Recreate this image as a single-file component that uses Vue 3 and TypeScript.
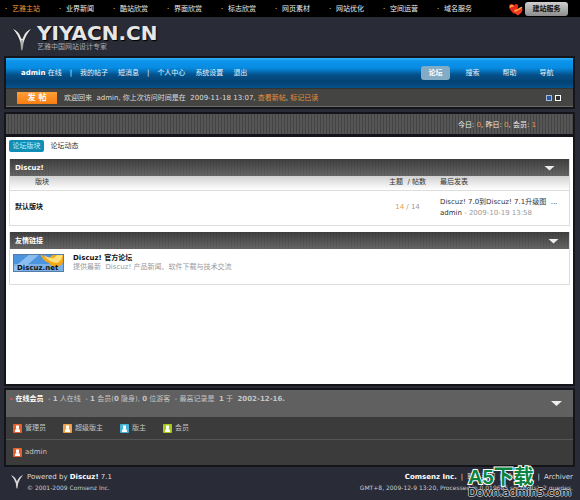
<script setup lang="ts">
import { ref } from 'vue'

interface Role { name: string; tone: string }

const siteLinks: string[] = ['艺雅主站', '业界新闻', '酷站欣赏', '界面欣赏', '标志欣赏', '网页素材', '网站优化', '空间运营', '域名服务']
const mainTabs: string[] = ['论坛', '搜索', '帮助', '导航']
const roles: Role[] = [
  { name: '管理员', tone: 'red' },
  { name: '超级版主', tone: 'orange' },
  { name: '版主', tone: 'blue' },
  { name: '会员', tone: 'green' },
]

const forumOpen = ref(true)
const linksOpen = ref(true)
const onlineOpen = ref(true)
</script>

<template>
  <div class="page">
    <nav class="topbar">
      <ul class="site-links">
        <li v-for="(name, i) in siteLinks" :key="name"><a href="#" :class="{ current: i === 0 }">{{ name }}</a></li>
      </ul>
      <div class="service">
        <svg class="hearts" viewBox="0 0 14 13" aria-hidden="true">
          <path d="M5 11C2 8 0 6 0 3.500C0 1 3 0 5 2.500C7 0 10 1 9 4.500C8.500 7 7 9 5 11Z" fill="#e8281c" />
          <path d="M9 12.500C6 10.500 4 9 5 6.500C6 4.500 8 5 9 6.500C10 3.500 14 4 13.500 7C13 9.500 11 11 9 12.500Z" fill="#f3391f" />
          <path d="M1.500 4Q2 2 4 3M6 8Q9 7 12.500 4.500" stroke="#ffb545" stroke-width="1.500" fill="none" stroke-linecap="round" />
        </svg>
        <button type="button" class="service-btn">建站服务</button>
      </div>
    </nav>

    <header class="brand">
      <svg class="mark" viewBox="0 0 20 24" aria-hidden="true">
        <path d="M0 1Q7 4 9 10L10 12L11 10Q13 4 20 1Q14 8 12 15L10.500 24L9 23L8 15Q6 8 0 1Z" fill="#e8e8ea" stroke="#111" stroke-width=".6" />
        <path d="M10 13V23" stroke="#777" />
      </svg>
      <div>
        <h1>YIYACN.CN</h1>
        <p>艺雅中国网站设计专家</p>
      </div>
    </header>

    <main>
      <section class="panel menu-panel">
        <div class="menu">
          <div class="user-menu">
            <span><a href="#" class="strong">admin</a> 在线</span>
            <span class="bar">|</span>
            <a href="#">我的帖子</a>
            <a href="#">短消息</a>
            <span class="bar">|</span>
            <a href="#">个人中心</a>
            <a href="#">系统设置</a>
            <a href="#">退出</a>
          </div>
          <nav class="tabs">
            <a v-for="(tab, i) in mainTabs" :key="tab" href="#" :class="{ active: i === 0 }">{{ tab }}</a>
          </nav>
        </div>
        <div class="welcome">
          <button type="button" class="post">发 帖</button>
          <p>欢迎回来&nbsp; admin, 你上次访问时间是在&nbsp; 2009-11-18 13:07, <a href="#">查看新帖</a>, <a href="#">标记已读</a></p>
          <div class="swatches">
            <button type="button" class="swatch blue" aria-label="蓝色"></button>
            <button type="button" class="swatch" aria-label="灰色"></button>
          </div>
        </div>
      </section>

      <section class="panel stats">
        <p>今日: <b>0</b>, 昨日: <b>0</b>, 会员: <b>1</b></p>
      </section>

      <section class="panel content">
        <nav class="subtabs">
          <a href="#" class="active">论坛版块</a>
          <a href="#">论坛动态</a>
        </nav>

        <section class="box">
          <header class="box-head">
            <h2>Discuz!</h2>
            <button type="button" class="toggle" aria-label="Discuz!" @click="forumOpen = !forumOpen"></button>
          </header>
          <table v-if="forumOpen">
            <thead>
              <tr><th class="name">版块</th><th class="count">主题&nbsp; / 帖数</th><th class="last">最后发表</th></tr>
            </thead>
            <tbody>
              <tr>
                <td class="name"><a href="#">默认版块</a></td>
                <td class="count"><b>14</b> / 14</td>
                <td class="last">
                  <a href="#">Discuz! 7.0到Discuz! 7.1升级图&nbsp; ...</a>
                  <p><a href="#">admin</a> - 2009-10-19 13:58</p>
                </td>
              </tr>
            </tbody>
          </table>
        </section>

        <section class="box">
          <header class="box-head">
            <h2>友情链接</h2>
            <button type="button" class="toggle inset" aria-label="友情链接" @click="linksOpen = !linksOpen"></button>
          </header>
          <div v-if="linksOpen" class="friend">
            <svg class="banner" viewBox="0 0 51 18" role="img" aria-label="Discuz.net">
              <rect width="51" height="18" fill="#4d94de" />
              <path d="M0 14L17 0H27L6 18H0Z" fill="#8abdf0" />
              <rect y="10" width="51" height="8" fill="#9ac5ef" opacity=".6" />
              <path d="M27 0Q32 3 36 4L41 0H51V6Q49 13 43 13Q38 13 36 9Q30 7 27 0Z" fill="#f5a81c" />
              <path d="M31 1Q36 5 41 4L45 0H50Q49 7 44 9Q35 8 31 1Z" fill="#ffe17a" />
              <rect x=".5" y=".5" width="50" height="17" fill="none" stroke="#567ba6" />
              <text x="4" y="16" class="banner-text">Discuz.net</text>
            </svg>
            <div>
              <h3><a href="#">Discuz! 官方论坛</a></h3>
              <p>提供最新&nbsp; Discuz! 产品新闻、软件下载与技术交流</p>
            </div>
          </div>
        </section>
      </section>

      <section class="panel online">
        <header class="online-head">
          <p><i>»</i> <a href="#">在线会员</a>&nbsp; - <b>1</b> 人在线&nbsp; - <b>1</b> 会员(<b>0</b> 隐身), <b>0</b> 位游客&nbsp; - 最高记录是&nbsp; <b>1</b> 于&nbsp; <b>2002-12-16.</b></p>
          <button type="button" class="toggle" aria-label="在线会员" @click="onlineOpen = !onlineOpen"></button>
        </header>
        <template v-if="onlineOpen">
          <ul class="roles">
            <li v-for="role in roles" :key="role.name">
              <svg :class="['person', role.tone]" viewBox="0 0 9 9" aria-hidden="true">
                <rect width="9" height="9" rx="1" /><path d="M3 1.500H6V4L5.500 5L7 6V8H2V6L3.500 5L3 4Z" fill="#fff" />
              </svg>{{ role.name }}
            </li>
          </ul>
          <ul class="roles members">
            <li>
              <svg class="person red" viewBox="0 0 9 9" aria-hidden="true">
                <rect width="9" height="9" rx="1" /><path d="M3 1.500H6V4L5.500 5L7 6V8H2V6L3.500 5L3 4Z" fill="#fff" />
              </svg><a href="#">admin</a>
            </li>
          </ul>
        </template>
      </section>
    </main>

    <footer class="footer">
      <div class="powered">
        <svg class="mark small" viewBox="0 0 20 24" aria-hidden="true">
          <path d="M0 1Q7 4 9 10L10 12L11 10Q13 4 20 1Q14 8 12 15L10.500 24L9 23L8 15Q6 8 0 1Z" fill="#d8d8da" />
        </svg>
        <div>
          <p>Powered by <strong>Discuz!</strong> 7.1</p>
          <p class="fine">© 2001-2009 Comsenz Inc.</p>
        </div>
      </div>
      <div class="foot-links">
        <p><strong>Comsenz Inc.</strong><span>|</span><a href="#">联系我们</a><span>|</span><a href="#">论坛首页</a><span>|</span><a href="#">Archiver</a></p>
        <p class="fine">GMT+8, 2009-12-9 13:20, Processed in 0.019685 second(s), 2 queries.</p>
      </div>
      <div class="watermark">
        <span class="wm-name">A5下载</span>
        <span class="wm-url">Down.admin5.com</span>
      </div>
    </footer>
  </div>
</template>

<style>
body { margin: 0; background: #292b36; }
</style>

<style scoped>
* { box-sizing: border-box; }
.page {
  min-height: 100vh;
  background: #292b36;
  color: #ddd;
  font: 7px/11px "DejaVu Sans", "Noto Sans CJK SC", sans-serif;
}
h1, h2, h3, p, ul { margin: 0; padding: 0; font-size: inherit; }
ul { list-style: none; }
a { color: inherit; text-decoration: none; }
button { margin: 0; padding: 0; border: 0; font: inherit; cursor: pointer; }
p, a, h2, h3, li { white-space: nowrap; }

.topbar { display: flex; justify-content: space-between; align-items: center; height: 17px; padding: 1px 12px 0 5px; background: #000; }
.site-links { display: flex; }
.site-links li { width: 54px; color: #eee; }
.site-links li::before { content: "·"; display: inline-block; width: 7px; }
.site-links .current { color: #e89a3c; }
.service { display: flex; align-items: center; gap: 2px; }
.hearts { width: 14px; height: 13px; }
.service-btn { width: 43px; height: 14px; border-radius: 3px; background: linear-gradient(#d0d0d0, #8c8c8c); color: #111; font-weight: bold; line-height: 14px; }

.brand { display: flex; gap: 5px; height: 41px; padding: 8px 12px; }
.mark { width: 20px; height: 24px; margin-top: 2px; }
.brand h1 { font-size: 20px; line-height: 17px; color: #e6e6e6; text-shadow: 1px 1px 1px #000; }
.brand p { color: #aaa; line-height: 9px; margin-top: 1px; }

main { padding: 0 7px 0 6px; }
.panel { outline: 2px solid #14151b; }
.menu { display: flex; justify-content: space-between; align-items: center; height: 30px; padding: 0 12px 0 15px; background: linear-gradient(#30b0f4 0, #0c95ed 3px, #078be0 10px, #05508a 17px, #034273 24px, #05538c); color: #e4f3fb; }
.user-menu { display: flex; gap: 10px; }
.user-menu .bar { margin: 0 -2px; }
.strong { font-weight: bold; color: #fff; }
.tabs { display: flex; gap: 8px; }
.tabs a { width: 29px; height: 14px; border-radius: 3px; line-height: 14px; text-align: center; }
.tabs .active { background: #82abc6; color: #fff; font-weight: bold; }
.welcome { display: flex; align-items: center; height: 19px; padding: 1px 12px 0 11px; border-top: 1px solid #333; border-bottom: 1px solid #6b6b6b; background: #444442; }
.welcome p { flex: 1; margin-left: 7px; }
.welcome a { color: #e89038; }
.post { width: 40px; height: 12px; background: linear-gradient(#ff9f38, #f77d10); color: #fff; font-size: 8px; line-height: 12px; font-weight: bold; }
.swatches { display: flex; gap: 3px; }
.swatch { width: 6px; height: 6px; border: 1px solid #fff; background: #333; }
.swatch.blue { background: #2855a0; border-color: #a9bbd8; }

.stats { display: flex; align-items: center; justify-content: flex-end; height: 20px; margin-top: 7px; padding: 2px 37px 0 0; background: repeating-linear-gradient(90deg, #555 0 2px, #444 2px 3px); color: #eee; }
.stats b { color: #e89a3c; font-weight: normal; }

.content { min-height: 247px; margin-top: 3px; padding: 3px 3px 0 3px; background: #fff; color: #333; }
.subtabs { display: flex; height: 19px; }
.subtabs a { width: 35px; height: 12px; border-radius: 2px; line-height: 12px; text-align: center; }
.subtabs a + a { width: 41px; }
.subtabs .active { background: #118eb4; color: #c5eefa; }
.box { min-height: 53px; margin-bottom: 6px; border: 1px solid #ddd; border-top: 0; }
.box-head { display: flex; align-items: center; justify-content: space-between; height: 17px; padding: 1px 14px 0 5px; background: repeating-linear-gradient(90deg, transparent 0 2px, #0001 2px 3px), linear-gradient(#3f3f3f, #666); color: #fff; }
.toggle { width: 11px; height: 5px; background: #eee; clip-path: polygon(0 0, 100% 0, 50% 100%); }
.toggle.inset { margin-right: -4px; }
table { width: 100%; border-collapse: collapse; table-layout: fixed; }
th { height: 14px; padding: 0; background: linear-gradient(#d2d2d2, #fff); border-bottom: 1px solid #ddd; font-weight: normal; text-align: left; white-space: nowrap; }
td { height: 35px; padding: 0; }
.name { padding-left: 5px; }
th.name { padding-left: 25px; }
td.name { font-weight: bold; color: #111; }
.count { width: 65px; text-align: center; color: #999; white-space: nowrap; }
th.count { color: #333; }
.count b { color: #dc9c4a; font-weight: normal; }
.last { width: 129px; }
.last p { color: #999; }
.last p a { color: #333; }
.friend { display: flex; gap: 9px; padding: 5px 3px; }
.banner { width: 51px; height: 18px; }
.banner-text { font: bold 7px "DejaVu Sans", sans-serif; fill: #111; }
.friend div { line-height: 9px; }
.friend h3 { color: #111; }
.friend p { color: #999; }

.online { margin-top: 6px; background: #3b3b3b; color: #c4c4c4; }
.online-head { display: flex; align-items: flex-start; justify-content: space-between; height: 27px; padding: 4px 11px 0 3px; background: #606060; }
.online-head i { color: #e65660; font-style: normal; }
.online-head a { color: #fff; font-weight: bold; }
.online-head .toggle { margin-top: 7px; }
.roles { display: flex; gap: 17px; align-items: center; height: 23px; padding: 0 7px; border-bottom: 1px solid #555; }
.roles li { display: flex; align-items: center; gap: 3px; }
.members { height: 25px; border-bottom: 0; }
.person { width: 9px; height: 9px; }
.red { fill: #e5622b; }
.orange { fill: #eda34a; }
.blue { fill: #46b4d8; }
.green { fill: #a6cb18; }

.footer { position: relative; display: flex; justify-content: space-between; padding: 7px 7px 0 11px; }
.powered { display: flex; gap: 4px; }
.mark.small { width: 12px; height: 15px; }
.footer strong { color: #fff; }
.fine { font-size: 6px; line-height: 10px; color: #ccc; }
.foot-links { text-align: right; }
.foot-links span { margin: 0 4px; }
.watermark { position: absolute; right: 10px; top: 2px; width: 102px; display: flex; flex-direction: column; }
.wm-name { font: bold 20px/20px "Liberation Sans", "Noto Sans CJK SC", sans-serif; color: #0b8340; -webkit-text-stroke: 2px #fff; paint-order: stroke fill; }
.wm-url { font: 11px/11px "DejaVu Sans", sans-serif; color: #000; text-shadow: 1px 0 #bbb, -1px 0 #bbb, 0 1px #bbb, 0 -1px #bbb; }
</style>
